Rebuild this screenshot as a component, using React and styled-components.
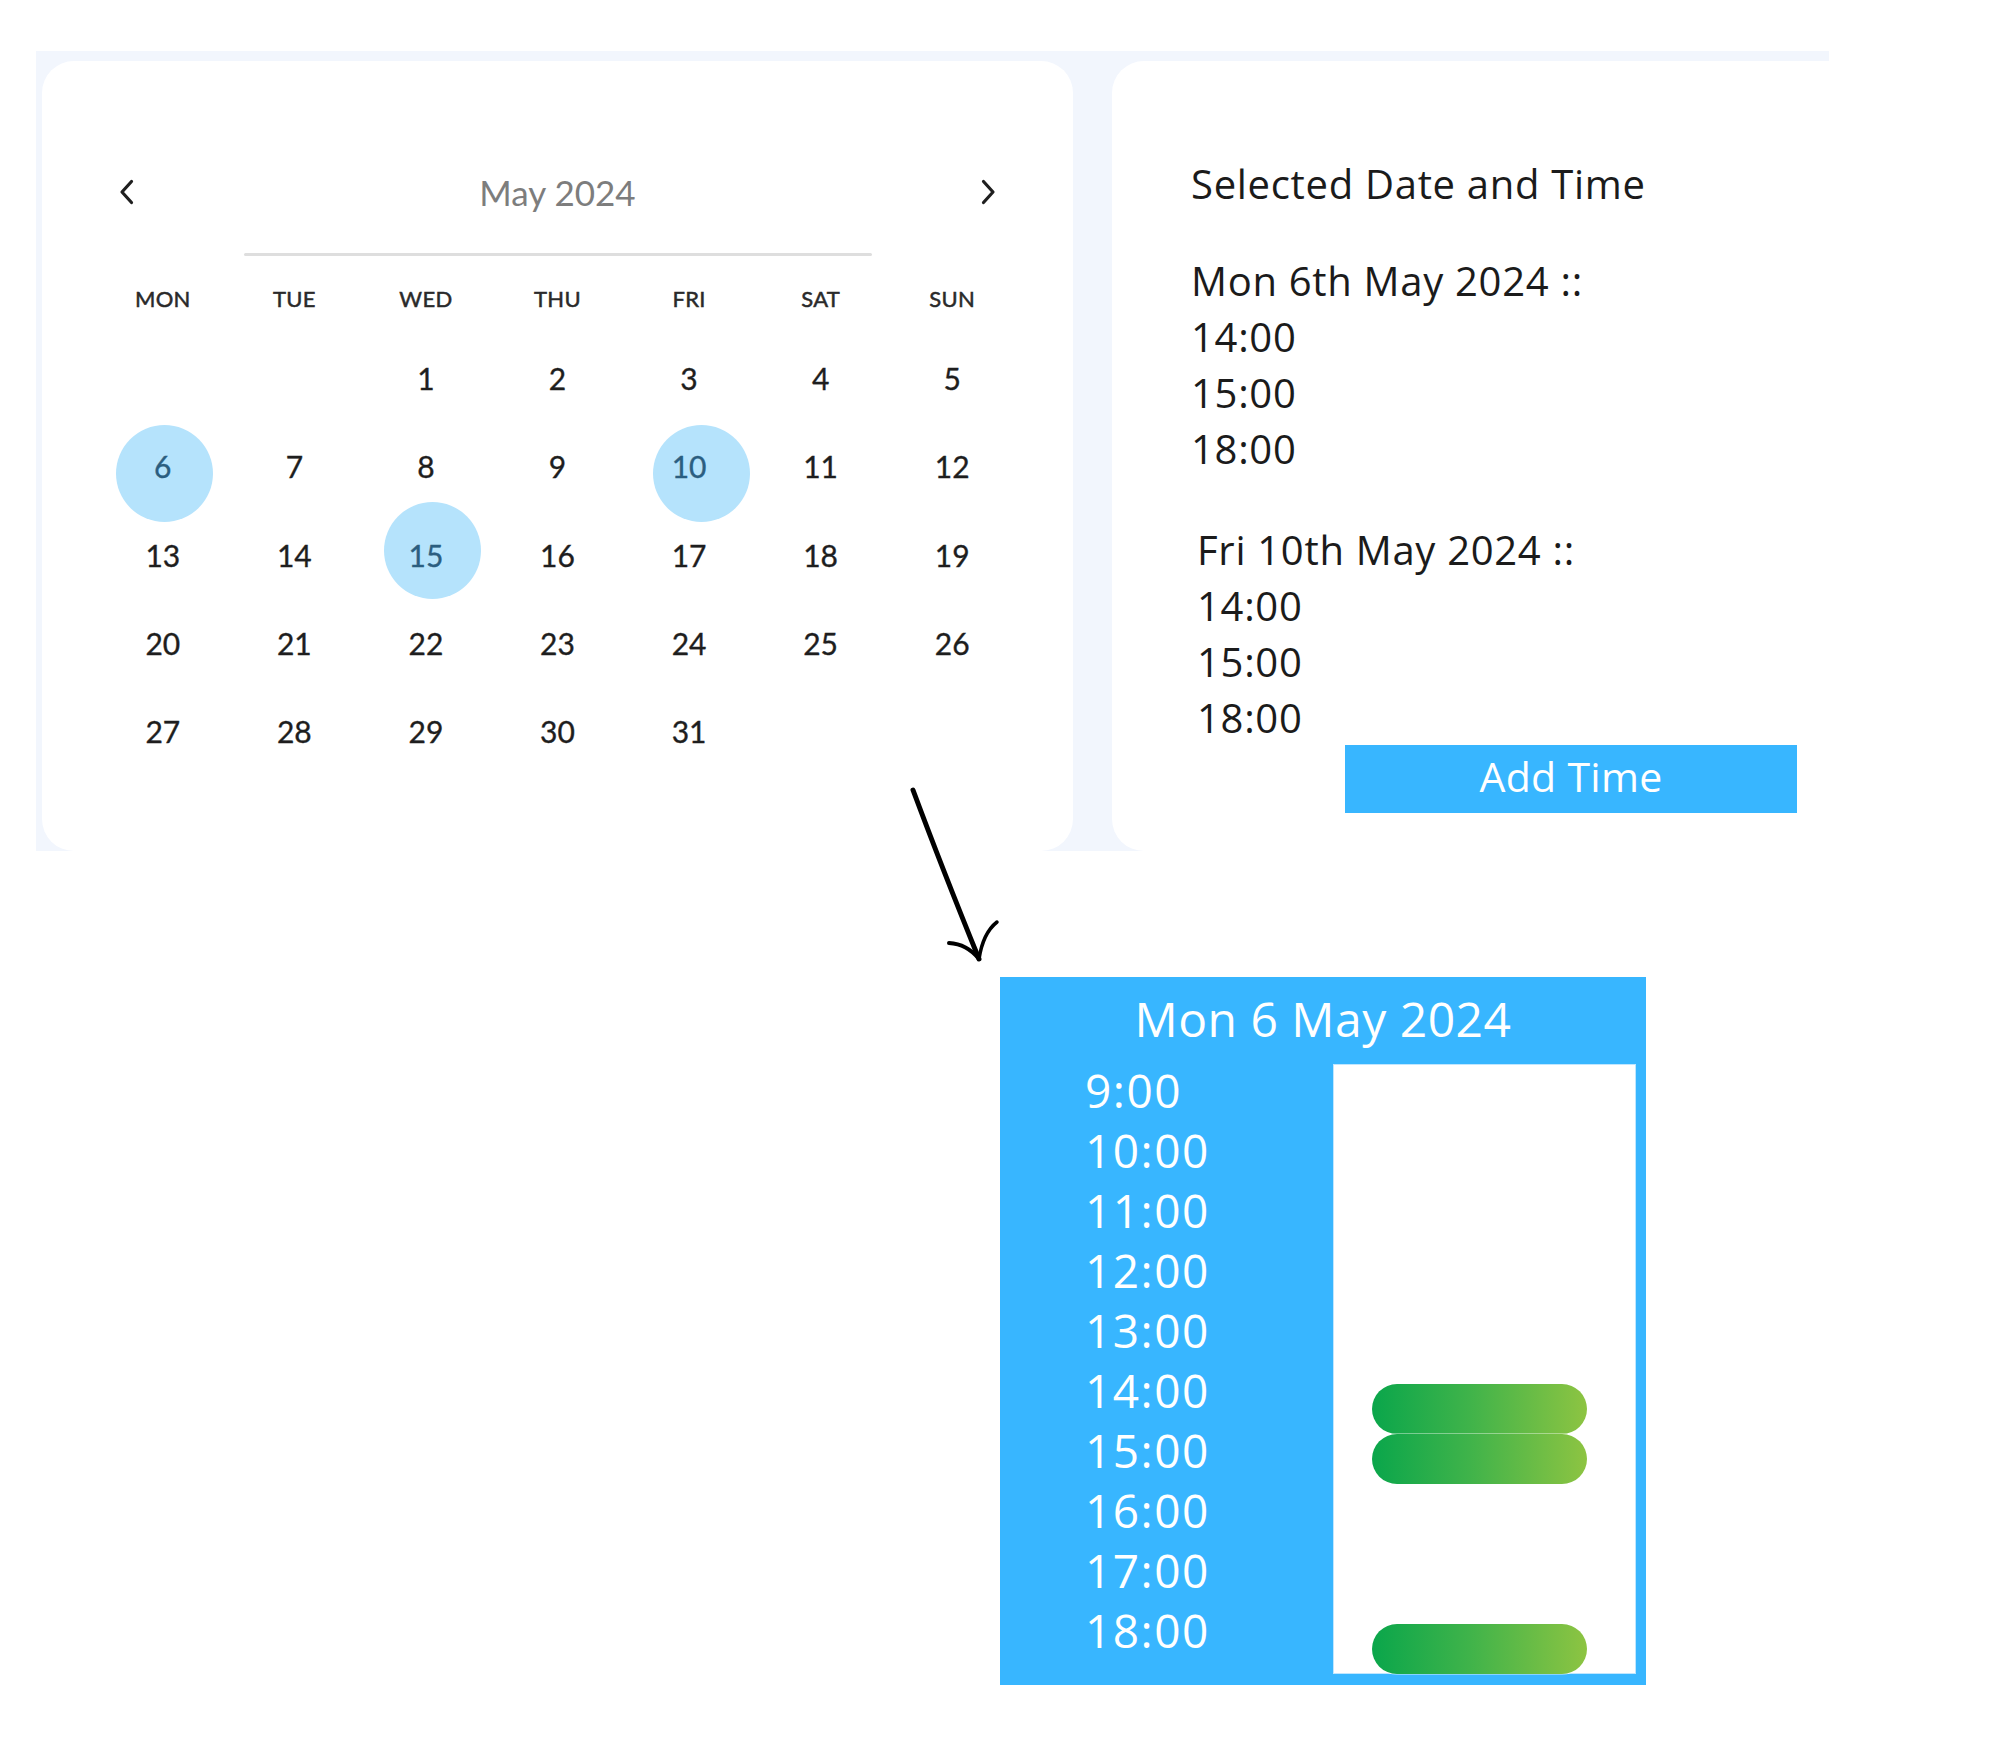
import React from "react";
import styled, { createGlobalStyle } from "styled-components";

const Global = createGlobalStyle`
  html, body { margin: 0; padding: 0; background: #ffffff; }
  body { font-family: "Open Sans", "Noto Sans", sans-serif; }
  * { box-sizing: border-box; }
`;

const Page = styled.div`
  position: relative;
  width: 2012px;
  min-height: 1754px;
  padding-top: 51px;
`;

const Top = styled.section`
  display: flex;
  gap: 39px;
  width: 1793px;
  height: 800px;
  margin-left: 36px;
  padding: 10px 0 0 6px;
  background: #f2f6fd;
  overflow: hidden;
`;

const CalendarCard = styled.div`
  flex: 0 0 1031px;
  height: 790px;
  background: #ffffff;
  border-radius: 32px;
  font-family: "Lato", "Liberation Sans", sans-serif;
`;

const CalHeader = styled.div`
  display: flex;
  align-items: center;
  justify-content: space-between;
  height: 50px;
  margin-top: 106px;
  padding: 0 77px;
`;

const NavButton = styled.button`
  display: flex;
  align-items: center;
  justify-content: center;
  width: 15px;
  height: 26px;
  padding: 0;
  border: none;
  background: transparent;
  cursor: pointer;
`;

const MonthTitle = styled.div`
  font-size: 35px;
  color: #7d7d7d;
  line-height: 50px;
`;

const Divider = styled.div`
  width: 628px;
  height: 3px;
  margin: 36px auto 0;
  background: #dedede;
  border-radius: 2px;
`;

const WeekRow = styled.div`
  display: grid;
  grid-template-columns: repeat(7, 1fr);
  align-items: center;
  height: 30px;
  margin-top: 27px;
  padding: 0 55px;
  text-align: center;
  font-size: 22px;
  color: #2a2a2a;
  -webkit-text-stroke: 0.5px #2a2a2a;
  letter-spacing: 0.3px;
`;

const DaysGrid = styled.div`
  display: grid;
  grid-template-columns: repeat(7, 1fr);
  grid-auto-rows: 88.3px;
  margin-top: 21px;
  padding: 0 55px;
`;

const DayCell = styled.div`
  position: relative;
  display: flex;
  align-items: center;
  justify-content: center;
  font-size: 30px;
  color: ${(p) => (p.$selected ? "#2b5e80" : "#1e1e1e")};
  -webkit-text-stroke: 0.35px currentColor;
`;

const Halo = styled.span`
  position: absolute;
  width: 97px;
  height: 97px;
  left: calc(50% - 48.5px + ${(p) => p.$dx}px);
  top: calc(50% - 48.5px + ${(p) => p.$dy}px);
  border-radius: 50%;
  background: #b5e3fc;
`;

const DayNum = styled.span`
  position: relative;
`;

const SummaryCard = styled.div`
  flex: 1;
  height: 790px;
  background: #ffffff;
  border-radius: 32px 0 0 32px;
  padding: 95px 0 0 79px;
  font-family: "Open Sans", "Noto Sans", sans-serif;
  font-size: 40px;
  line-height: 56px;
  letter-spacing: 0.7px;
  color: #1b1b1b;
`;

const SummaryTitle = styled.h2`
  margin: 0;
  font-size: 40px;
  font-weight: 400;
  line-height: 56px;
`;

const DateBlock = styled.div`
  margin-top: ${(p) => p.$gap}px;
  padding-left: ${(p) => p.$indent}px;
`;

const Line = styled.div`
  padding-left: ${(p) => p.$shift || 0}px;
`;

const AddButton = styled.button`
  display: block;
  width: 452px;
  height: 68px;
  margin-left: 154px;
  margin-top: -1px;
  padding: 0 0 6px;
  border: none;
  background: #38b6ff;
  color: #ffffff;
  font-family: "Open Sans", "Noto Sans", sans-serif;
  font-size: 41px;
  letter-spacing: 0.3px;
  line-height: 62px;
  cursor: pointer;
`;

const ArrowWrap = styled.svg`
  position: absolute;
  left: 900px;
  top: 780px;
  width: 110px;
  height: 190px;
  overflow: visible;
`;

const Timeline = styled.section`
  display: flex;
  flex-direction: column;
  width: 646px;
  height: 708px;
  margin: 126px 0 0 1000px;
  padding-top: 7px;
  background: #38b6ff;
  font-family: "Open Sans", "Noto Sans", sans-serif;
  color: #ffffff;
`;

const TimelineTitle = styled.div`
  height: 70px;
  line-height: 70px;
  text-align: center;
  font-size: 48px;
  letter-spacing: 0.5px;
`;

const TimelineBody = styled.div`
  display: flex;
  align-items: flex-start;
`;

const TimeCol = styled.div`
  width: 333px;
  padding: 6px 0 0 85px;
`;

const TimeLabel = styled.div`
  font-size: 46px;
  line-height: 60px;
  letter-spacing: 1.5px;
`;

const SlotPanel = styled.div`
  position: relative;
  width: 303px;
  height: 610px;
  margin-top: 10px;
  background: #ffffff;
  border: 1px solid #bfe6ff;
`;

const Pill = styled.div`
  position: absolute;
  left: 38px;
  width: 215px;
  height: 50px;
  border-radius: 25px;
  background: linear-gradient(90deg, #0aa64b 0%, #3fb34a 45%, #8dc442 100%);
  box-shadow: 0 0 0 0.6px rgba(255, 255, 255, 0.8);
`;

const Chevron = ({ dir }) => (
  <svg width="15" height="26" viewBox="0 0 15 26">
    <path
      d={dir === "left" ? "M12.5 2.5 L3 13 L12.5 23.5" : "M2.5 2.5 L12 13 L2.5 23.5"}
      fill="none"
      stroke="#1f1f1f"
      strokeWidth="3.2"
      strokeLinecap="round"
      strokeLinejoin="round"
    />
  </svg>
);

const weekdays = ["MON", "TUE", "WED", "THU", "FRI", "SAT", "SUN"];
const selected = {
  6: { dx: 1.5, dy: 7.5 },
  10: { dx: 12, dy: 7.5 },
  15: { dx: 7, dy: -4.5 },
};

const cells = [null, null, ...Array.from({ length: 31 }, (_, i) => i + 1)];

const blocks = [
  { label: "Mon 6th May 2024 ::", times: ["14:00", "15:00", "18:00"], gap: 41, indent: 0, shift: -2 },
  { label: "Fri 10th May 2024 ::", times: ["14:00", "15:00", "18:00"], gap: 45, indent: 6, shift: -2 },
];

const hours = ["9:00", "10:00", "11:00", "12:00", "13:00", "14:00", "15:00", "16:00", "17:00", "18:00"];
const bookings = [320, 370, 560];

export default function App() {
  return (
    <>
      <Global />
      <Page>
        <Top>
          <CalendarCard>
            <CalHeader>
              <NavButton aria-label="Previous month">
                <Chevron dir="left" />
              </NavButton>
              <MonthTitle>May 2024</MonthTitle>
              <NavButton aria-label="Next month">
                <Chevron dir="right" />
              </NavButton>
            </CalHeader>
            <Divider />
            <WeekRow>
              {weekdays.map((d) => (
                <div key={d}>{d}</div>
              ))}
            </WeekRow>
            <DaysGrid>
              {cells.map((d, i) => {
                const sel = d && selected[d];
                return (
                  <DayCell key={i} $selected={!!sel}>
                    {sel && <Halo $dx={sel.dx} $dy={sel.dy} />}
                    {d && <DayNum>{d}</DayNum>}
                  </DayCell>
                );
              })}
            </DaysGrid>
          </CalendarCard>
          <SummaryCard>
            <SummaryTitle>Selected Date and Time</SummaryTitle>
            {blocks.map((b) => (
              <DateBlock key={b.label} $gap={b.gap} $indent={b.indent}>
                <Line>{b.label}</Line>
                {b.times.map((t) => (
                  <Line key={t} $shift={b.shift}>
                    {t}
                  </Line>
                ))}
              </DateBlock>
            ))}
            <AddButton>Add Time</AddButton>
          </SummaryCard>
        </Top>

        <ArrowWrap viewBox="0 0 110 190">
          <path d="M13 10 Q42 88 79 179" fill="none" stroke="#000" strokeWidth="5" strokeLinecap="round" />
          <path d="M49 163 Q67 164 79 179" fill="none" stroke="#000" strokeWidth="4" strokeLinecap="round" />
          <path d="M97 142 Q83 153 79 179" fill="none" stroke="#000" strokeWidth="3.5" strokeLinecap="round" />
        </ArrowWrap>

        <Timeline>
          <TimelineTitle>Mon 6 May 2024</TimelineTitle>
          <TimelineBody>
            <TimeCol>
              {hours.map((h) => (
                <TimeLabel key={h}>{h}</TimeLabel>
              ))}
            </TimeCol>
            <SlotPanel>
              {bookings.map((top) => (
                <Pill key={top} style={{ top: top - 1 }} />
              ))}
            </SlotPanel>
          </TimelineBody>
        </Timeline>
      </Page>
    </>
  );
}
